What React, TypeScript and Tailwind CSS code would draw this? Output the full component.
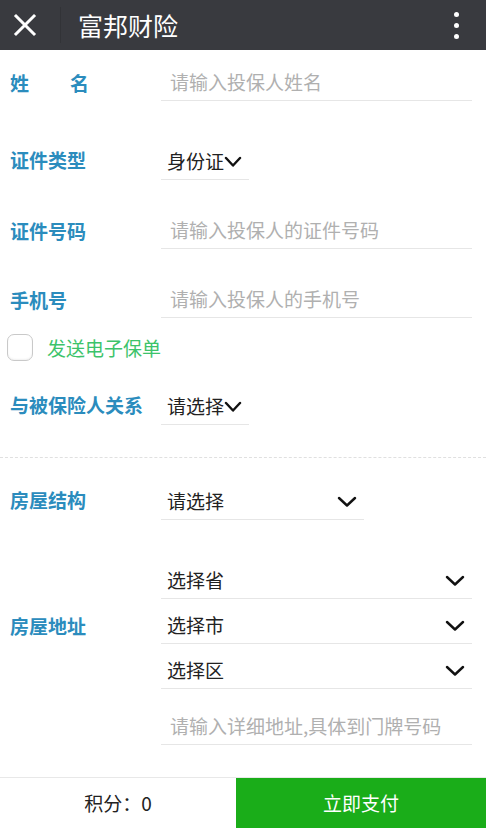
import React from 'react';

const FONT = { fontFamily: '"Noto Sans CJK SC", "Noto Sans", sans-serif' };

// Small V chevron used by selects
function Chevron({ size = 'lg' }: { size?: 'sm' | 'lg' }) {
  const w = size === 'sm' ? 18 : 20;
  return (
    <svg width={w} height="11" viewBox={`0 0 ${w} 11`} className="shrink-0">
      <path
        d={`M2 2 L${w / 2} 9.5 L${w - 2} 2`}
        fill="none"
        stroke="#111"
        strokeWidth="2.4"
        strokeLinecap="round"
        strokeLinejoin="round"
      />
    </svg>
  );
}

function Label({ children }: { children: React.ReactNode }) {
  return (
    <div className="w-[161px] shrink-0 pl-[10px] text-[19px] font-bold text-[#2b8cbd] leading-none">
      {children}
    </div>
  );
}

function TextInput({ placeholder }: { placeholder: string }) {
  return (
    <div className="w-[311px] h-[37px] border-b border-[#e6e6e6] flex items-center pl-[9px] text-[19px] text-[#b0b0b0]">
      {placeholder}
    </div>
  );
}

function Select({
  value,
  width,
  chevron = 'lg',
}: {
  value: string;
  width: string;
  chevron?: 'sm' | 'lg';
}) {
  return (
    <div className={`${width} h-[37px] border-b border-[#e6e6e6] flex items-center text-[19px] text-[#222] pl-[6px]`}>
      {chevron === 'sm' ? (
        <>
          <span>{value}</span>
          <Chevron size="sm" />
        </>
      ) : (
        <>
          <span className="flex-1">{value}</span>
          <span className="pr-[7px] flex"><Chevron /></span>
        </>
      )}
    </div>
  );
}

export default function App() {
  return (
    <div className="w-[486px] h-[828px] bg-white flex flex-col overflow-hidden" style={FONT}>
      {/* ── Header ── */}
      <div className="h-[50px] bg-[#393a3f] flex items-center shrink-0">
        <div className="w-[61px] h-[36px] flex items-center justify-center border-r border-[#323337]">
          <svg width="24" height="24" viewBox="0 0 24 24" className="-ml-[10px]">
            <path d="M3 3 L21 21 M21 3 L3 21" stroke="#fff" strokeWidth="3" strokeLinecap="square" />
          </svg>
        </div>
        <div className="pl-[17px] flex-1 text-[25px] text-white leading-none">富邦财险</div>
        <div className="w-[60px] flex flex-col items-center gap-[6px]">
          <span className="w-[5px] h-[5px] rounded-full bg-white" />
          <span className="w-[5px] h-[5px] rounded-full bg-white" />
          <span className="w-[5px] h-[5px] rounded-full bg-white" />
        </div>
      </div>

      {/* ── Insured person ── */}
      <div className="mt-[14px] flex items-center">
        <Label>
          <span className="inline-flex gap-[41px]"><span>姓</span><span>名</span></span>
        </Label>
        <TextInput placeholder="请输入投保人姓名" />
      </div>

      <div className="mt-[42px] flex items-center">
        <Label><span className="relative -top-[2px]">证件类型</span></Label>
        <Select value="身份证" width="w-[88px]" chevron="sm" />
      </div>

      <div className="mt-[32px] flex items-center">
        <Label>证件号码</Label>
        <TextInput placeholder="请输入投保人的证件号码" />
      </div>

      <div className="mt-[32px] flex items-center">
        <Label>手机号</Label>
        <TextInput placeholder="请输入投保人的手机号" />
      </div>

      <div className="mt-[16px] flex items-center h-[27px]">
        <div className="ml-[7px] w-[26px] h-[27px] rounded-[7px] border border-[#c9c9c9] bg-white shadow-[inset_0_-1px_2px_rgba(0,0,0,0.06)]" />
        <span className="ml-[14px] text-[19px] text-[#3cc36a] leading-none">发送电子保单</span>
      </div>

      <div className="mt-[27px] flex items-center">
        <Label><span className="relative -top-[2px]">与被保险人关系</span></Label>
        <Select value="请选择" width="w-[88px]" chevron="sm" />
      </div>

      <div className="mt-[32px] border-t border-dashed border-[#e0e0e0]" />

      {/* ── House ── */}
      <div className="mt-[25px] flex items-center">
        <Label><span className="relative -top-[2px]">房屋结构</span></Label>
        <Select value="请选择" width="w-[203px]" />
      </div>

      <div className="mt-[42px] flex items-center">
        <Label>房屋地址</Label>
        <div className="flex flex-col gap-[8px]">
          <Select value="选择省" width="w-[311px]" />
          <Select value="选择市" width="w-[311px]" />
          <Select value="选择区" width="w-[311px]" />
        </div>
      </div>

      <div className="mt-[19px] flex items-center">
        <div className="w-[161px] shrink-0" />
        <TextInput placeholder="请输入详细地址,具体到门牌号码" />
      </div>

      {/* ── Bottom bar ── */}
      <div className="mt-auto h-[51px] flex border-t border-[#e8e8e8] shrink-0">
        <div className="w-[236px] flex items-center justify-center text-[19px] text-[#222]">积分：0</div>
        <div className="flex-1 bg-[#1aad19] flex items-center justify-center text-[19px] text-white">立即支付</div>
      </div>
    </div>
  );
}
